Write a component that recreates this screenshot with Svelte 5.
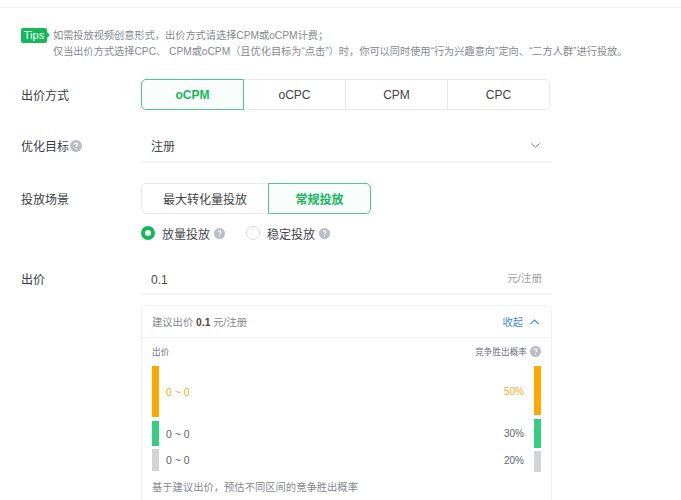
<script>
  const modes = ['oCPM', 'oCPC', 'CPM', 'CPC'];
  const rows = [
    { range: '0 ~ 0', pct: '50%', cls: 'orange' },
    { range: '0 ~ 0', pct: '30%', cls: 'green' },
    { range: '0 ~ 0', pct: '20%', cls: 'gray' }
  ];
</script>

{#snippet help(size)}
  <svg class="help" width={size} height={size} viewBox="0 0 12 12" aria-hidden="true">
    <circle cx="6" cy="6" r="6" fill="#b9bcc2" />
    <path d="M4.4 4.7c0-1 .7-1.6 1.7-1.6s1.6.6 1.6 1.4c0 1.2-1.6 1.2-1.6 2.4" fill="none" stroke="#fff" stroke-width="1.1" />
    <circle cx="6.1" cy="8.7" r=".75" fill="#fff" />
  </svg>
{/snippet}

<div class="page">
  <div class="tips">
    <span class="badge">Tips</span>
    <p>如需投放视频创意形式，出价方式请选择CPM或oCPM计费；<br />仅当出价方式选择CPC、 CPM或oCPM（且优化目标为“点击”）时，你可以同时使用“行为兴趣意向”定向、“二方人群”进行投放。</p>
  </div>

  <div class="row mode-row">
    <div class="label">出价方式</div>
    <div class="seg modes">
      {#each modes as m, i}
        <div class="seg-item" class:active={i === 0}>{m}</div>
      {/each}
    </div>
  </div>

  <div class="row goal-row">
    <div class="label">优化目标{@render help(12)}</div>
    <div class="field">
      <span class="value">注册</span>
      <svg class="chev" width="9" height="5" viewBox="0 0 9 5"><path d="M.4.4 4.500 4.500 8.600.4" fill="none" stroke="#8b8f96" stroke-width="1" /></svg>
    </div>
  </div>

  <div class="row scene-row">
    <div class="label">投放场景</div>
    <div class="scene">
      <div class="seg scenes">
        <div class="seg-item">最大转化量投放</div>
        <div class="seg-item active">常规投放</div>
      </div>
      <div class="radios">
        <span class="radio"><i class="dot on"></i>放量投放{@render help(11)}</span>
        <span class="radio"><i class="dot"></i>稳定投放{@render help(11)}</span>
      </div>
    </div>
  </div>

  <div class="row bid-row">
    <div class="label">出价</div>
    <div class="bid">
      <div class="field bid-field">
        <span class="value">0.1</span>
        <span class="unit">元/注册</span>
      </div>
      <div class="card">
        <div class="card-head">
          <span>建议出价 <b>0.1</b> 元/注册</span>
          <span class="fold">收起
            <svg width="9" height="6" viewBox="0 0 9 6"><path d="M.4 5.200 4.500 1l4.100 4.200" fill="none" stroke="#3f86dc" stroke-width="1.100" /></svg>
          </span>
        </div>
        <div class="card-body">
          <div class="chart-head">
            <span>出价</span>
            <span class="prob">竞争胜出概率{@render help(11)}</span>
          </div>
          {#each rows as r}
            <div class="bar-row {r.cls}">
              <i class="bar"></i>
              <span class="range">{r.range}</span>
              <span class="pct">{r.pct}</span>
              <i class="bar end"></i>
            </div>
          {/each}
          <p class="foot">基于建议出价，预估不同区间的竞争胜出概率</p>
        </div>
      </div>
    </div>
  </div>
</div>

<style>
  :global(body) {
    margin: 0;
    background: #fff;
    overflow: hidden;
  }
  .page {
    height: 493px;
    overflow: hidden;
    box-sizing: border-box;
    border-top: 1px solid #f0f0f0;
    margin-top: 7px;
    padding: 19px 0 0 21px;
    font-family: "Liberation Sans", "Noto Sans CJK SC", sans-serif;
    color: #333;
    font-size: 12px;
  }
  .tips {
    display: flex;
    align-items: flex-start;
    gap: 6px;
  }
  .badge {
    flex: none;
    position: relative;
    width: 26px;
    height: 15px;
    margin-top: 1px;
    background: #12b85a;
    color: #fff;
    border-radius: 2px;
    text-align: center;
    font-size: 11px;
    line-height: 15px;
  }
  .badge::after {
    content: "";
    position: absolute;
    right: -3px;
    top: 4px;
    border-left: 3px solid #12b85a;
    border-top: 3px solid transparent;
    border-bottom: 3px solid transparent;
  }
  .tips p {
    margin: 1px 0 0;
    color: #85888e;
    font-size: 10.200px;
    line-height: 16px;
    white-space: nowrap;
  }
  .row {
    display: flex;
    align-items: flex-start;
  }
  .label {
    flex: none;
    width: 120px;
    display: flex;
    align-items: center;
    gap: 1px;
    font-size: 12px;
    color: #3a3d42;
  }
  .mode-row {
    margin-top: 19px;
  }
  .mode-row .label {
    height: 31px;
  }
  .seg {
    display: flex;
    box-sizing: border-box;
    height: 31px;
  }
  .modes {
    width: 409px;
  }
  .modes .seg-item {
    flex: 1;
  }
  .seg-item {
    box-sizing: border-box;
    display: flex;
    align-items: center;
    justify-content: center;
    border: 1px solid #e8e8ea;
    margin-left: -1px;
    color: #3f4247;
    font-size: 12px;
  }
  .seg-item:first-child {
    margin-left: 0;
    border-radius: 5px 0 0 5px;
  }
  .seg-item:last-child {
    border-radius: 0 5px 5px 0;
  }
  .seg-item.active {
    position: relative;
    border-color: #4ccb85;
    background: #f9fdfb;
    color: #12b85a;
    font-weight: 700;
  }
  .goal-row {
    margin-top: 20px;
  }
  .goal-row .label {
    height: 31px;
  }
  .field {
    box-sizing: border-box;
    width: 411px;
    height: 33px;
    padding: 0 12px 0 10px;
    display: flex;
    align-items: center;
    justify-content: space-between;
    border-bottom: 2px solid #f2f2f3;
  }
  .value {
    font-size: 12px;
    color: #44474c;
  }
  .scene-row {
    margin-top: 20px;
  }
  .scene-row .label {
    height: 31px;
  }
  .scenes .seg-item:first-child {
    width: 128px;
  }
  .scenes .seg-item:last-child {
    width: 103px;
  }
  .radios {
    display: flex;
    gap: 21px;
    margin-top: 11px;
    height: 16px;
    align-items: center;
  }
  .radio {
    display: flex;
    align-items: center;
    font-size: 12px;
    color: #44474c;
  }
  .radio .help {
    margin-left: 4px;
  }
  .dot {
    box-sizing: border-box;
    width: 14px;
    height: 14px;
    border-radius: 50%;
    border: 1px solid #d6d8db;
    margin-right: 7px;
  }
  .dot.on {
    border: 4px solid #12b85a;
  }
  .bid-row {
    margin-top: 24px;
  }
  .bid-row .label {
    height: 27px;
  }
  .bid {
    width: 411px;
  }
  .bid-field {
    height: 30px;
    padding-right: 10px;
  }
  .bid-field .value {
    padding-top: 2px;
  }
  .unit {
    color: #9a9da2;
    font-size: 10.600px;
    padding-bottom: 3px;
  }
  .card {
    box-sizing: border-box;
    margin-top: 10px;
    border: 1px solid #f0f0f1;
    border-radius: 6px;
    height: 220px;
  }
  .card-head {
    box-sizing: border-box;
    height: 32px;
    padding: 0 12px 0 10px;
    display: flex;
    align-items: center;
    justify-content: space-between;
    border-bottom: 1px solid #f0f0f1;
    color: #85888e;
    font-size: 10.300px;
  }
  .card-head b {
    color: #44474c;
  }
  .fold {
    display: flex;
    align-items: center;
    gap: 7px;
    color: #3f86dc;
    font-size: 10.300px;
  }
  .card-body {
    padding: 5px 10px 0;
  }
  .chart-head {
    display: flex;
    justify-content: space-between;
    align-items: center;
    height: 16px;
    color: #6f7277;
    font-size: 8.700px;
    margin-bottom: 7px;
  }
  .prob {
    display: flex;
    align-items: center;
    gap: 3px;
  }
  .bar-row {
    display: flex;
    align-items: center;
    font-size: 10.500px;
    color: #5f6267;
  }
  .bar {
    flex: none;
    width: 7px;
    align-self: stretch;
  }
  .range {
    margin-left: 7px;
    flex: 1;
  }
  .pct {
    margin-right: 10px;
    font-size: 10px;
  }
  .orange {
    height: 51px;
    color: #f7a823;
    margin-bottom: 4px;
  }
  .orange .bar {
    background: #ffa900;
  }
  .orange .end {
    align-self: flex-start;
    height: 49px;
  }
  .green {
    height: 25px;
    margin-bottom: 3px;
  }
  .green .bar {
    background: #35cd7e;
  }
  .green .end {
    align-self: center;
    height: 29px;
  }
  .gray {
    height: 22px;
  }
  .gray .bar {
    background: #d2d4d8;
  }
  .gray .end {
    align-self: flex-start;
    height: 21px;
    margin-top: 2px;
  }
  .foot {
    margin: 9px 0 0;
    color: #85888e;
    font-size: 10.300px;
    line-height: 16px;
    white-space: nowrap;
  }
</style>
